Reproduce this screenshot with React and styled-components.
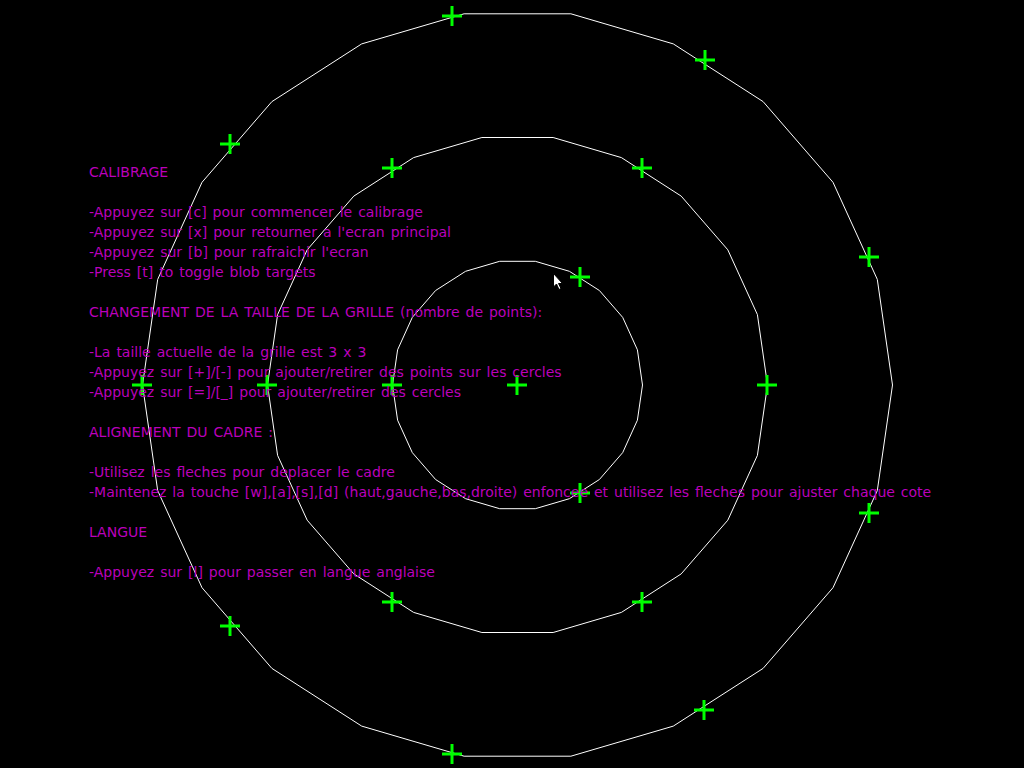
import React from 'react';
import styled, { createGlobalStyle } from 'styled-components';

const CX = 517.5;
const CY = 385;
const SIDES = 22;

const rings = [
  { r: 125, points: 3, start: 180 },
  { r: 250, points: 6, start: 180 },
  { r: 375, points: 9, start: 180 },
];

const lines = [
  'CALIBRAGE',
  '',
  '-Appuyez sur [c] pour commencer le calibrage',
  "-Appuyez sur [x] pour retourner a l'ecran principal",
  "-Appuyez sur [b] pour rafraichir l'ecran",
  '-Press [t] to toggle blob targets',
  '',
  'CHANGEMENT DE LA TAILLE DE LA GRILLE (nombre de points):',
  '',
  '-La taille actuelle de la grille est 3 x 3',
  '-Appuyez sur [+]/[-] pour ajouter/retirer des points sur les cercles',
  '-Appuyez sur [=]/[_] pour ajouter/retirer des cercles',
  '',
  'ALIGNEMENT DU CADRE :',
  '',
  '-Utilisez les fleches pour deplacer le cadre',
  '-Maintenez la touche [w],[a],[s],[d] (haut,gauche,bas,droite) enfoncee et utilisez les fleches pour ajuster chaque cote',
  '',
  'LANGUE',
  '',
  '-Appuyez sur [l] pour passer en langue anglaise',
];

const rad = (d) => (d * Math.PI) / 180;

const polygon = (r) => {
  const pts = [];
  for (let i = 0; i < SIDES; i++) {
    const a = rad((i * 360) / SIDES);
    pts.push(`${(CX + r * Math.cos(a)).toFixed(1)},${(CY + r * Math.sin(a)).toFixed(1)}`);
  }
  return pts.join(' ');
};

const Cross = ({ x, y }) => (
  <g stroke="#00ff00" strokeWidth="3">
    <line x1={x - 10} y1={y} x2={x + 10} y2={y} />
    <line x1={x} y1={y - 10} x2={x} y2={y + 10} />
  </g>
);

const GlobalStyle = createGlobalStyle`
  html, body {
    margin: 0;
    padding: 0;
    background: #000;
  }
`;

const Screen = styled.div`
  position: relative;
  width: 1024px;
  height: 768px;
  overflow: hidden;
  background: #000;
`;

const Canvas = styled.svg`
  position: absolute;
  left: 0;
  top: 0;
`;

const Help = styled.div`
  position: relative;
  padding: 162px 0 0 89px;
  font-family: 'DejaVu Sans', Verdana, sans-serif;
  font-size: 14px;
  line-height: 20px;
  color: #bb00bb;
  word-spacing: 1.5px;
  white-space: pre;
`;

const Line = styled.div`
  height: 20px;
`;

const App = () => {
  const crosses = [{ x: 517, y: CY }];
  rings.forEach(({ r, points, start }) => {
    for (let i = 0; i < points; i++) {
      const a = rad(start + (i * 360) / points);
      crosses.push({ x: Math.round(517 + r * Math.cos(a)), y: Math.round(CY + r * Math.sin(a)) });
    }
  });

  return (
    <Screen>
      <GlobalStyle />
      <Canvas width="1024" height="768" viewBox="0 0 1024 768">
        {rings.map(({ r }) => (
          <polygon key={r} points={polygon(r)} fill="none" stroke="#fff" strokeWidth="1" />
        ))}
        {crosses.map((c, i) => (
          <Cross key={i} x={c.x} y={c.y} />
        ))}
      </Canvas>
      <Help>
        {lines.map((t, i) => (
          <Line key={i}>{t}</Line>
        ))}
      </Help>
      <Canvas width="1024" height="768" viewBox="0 0 1024 768">
        <path
          d="M553.5 273.5 L553.5 287 L556.5 284 L559 289.5 L561 288.5 L558.5 283.5 L562.5 283.5 Z"
          fill="#fff"
          stroke="#000"
          strokeWidth="1"
        />
      </Canvas>
    </Screen>
  );
};

export default App;
